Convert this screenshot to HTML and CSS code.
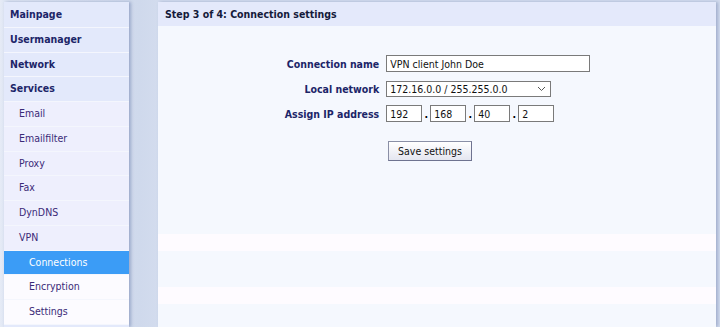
FILE: index.html
```html
<!DOCTYPE html>
<html lang="en">
<head>
    <meta charset="UTF-8">
    <meta name="viewport" content="width=device-width, initial-scale=1.0">
    <title>VPN - Connection settings</title>
    <link rel="stylesheet" href="styles.css">
</head>
<body>
    <div class="page">
        <ul class="menu">
            <li class="top"><a href="#">Mainpage</a></li>
            <li class="top"><a href="#">Usermanager</a></li>
            <li class="top"><a href="#">Network</a></li>
            <li class="top"><a href="#">Services</a></li>
            <li class="sub"><a href="#">Email</a></li>
            <li class="sub"><a href="#">Emailfilter</a></li>
            <li class="sub"><a href="#">Proxy</a></li>
            <li class="sub"><a href="#">Fax</a></li>
            <li class="sub"><a href="#">DynDNS</a></li>
            <li class="sub"><a href="#">VPN</a></li>
            <li class="subsub active"><a href="#">Connections</a></li>
            <li class="subsub"><a href="#">Encryption</a></li>
            <li class="subsub"><a href="#">Settings</a></li>
        </ul>

        <div class="main">
            <h2 class="main-title">Step 3 of 4: Connection settings</h2>
            <div class="main-body">
                <table class="form">
                    <tr>
                        <th>Connection name</th>
                        <td><input type="text" class="wide" value="VPN client John Doe"></td>
                    </tr>
                    <tr>
                        <th>Local network</th>
                        <td>
                            <div class="select">
                                <span>172.16.0.0 / 255.255.0.0</span>
                                <svg width="9" height="6" viewBox="0 0 9 6"><path d="M1 1 L4.5 4.5 L8 1" fill="none" stroke="#555" stroke-width="1"/></svg>
                            </div>
                        </td>
                    </tr>
                    <tr>
                        <th>Assign IP address</th>
                        <td class="ip">
                            <input type="text" value="192"><span>.</span><input type="text" value="168"><span>.</span><input type="text" value="40"><span>.</span><input type="text" value="2">
                        </td>
                    </tr>
                </table>
                <button class="save">Save settings</button>
            </div>
        </div>
    </div>
</body>
</html>
```

FILE: styles.css
```css
body {
    margin: 0;
    background: linear-gradient(to right, #e6ebf6 0px, #dfe6f4 4px, #cfd9ec 140px, #d3dcee 160px);
    font-family: "DejaVu Sans Condensed", "DejaVu Sans", Verdana, sans-serif;
    font-size: 10.5px;
    height: 327px;
    overflow: hidden;
}
.page {
    display: flex;
    align-items: flex-start;
    padding: 2px 0 0 4px;
}
.menu {
    list-style: none;
    margin: 0;
    padding: 1px 0 0;
    width: 125px;
    height: 325px;
    box-sizing: border-box;
    background: #e3e9fb;
    box-shadow: 2px 0 3px rgba(90, 110, 160, 0.45);
}
.menu li {
    border-bottom: 1px solid #f4f6fd;
}
.menu a {
    display: block;
    height: 23.75px;
    line-height: 23.75px;
    text-decoration: none;
}
.menu .top a {
    background: #e3e9fb;
    color: #1c2568;
    font-weight: bold;
    padding-left: 6px;
}
.menu .sub a {
    background: #eeeffd;
    color: #3b2a78;
    padding-left: 15px;
}
.menu .subsub a {
    background: #fcfbff;
    color: #3b2a78;
    padding-left: 25px;
}
.menu .active a {
    background: #3b9cf6;
    color: #fff;
}
.main {
    margin-left: 29px;
    width: 558px;
    box-shadow: 2px 0 3px rgba(90, 110, 160, 0.4);
}
.main-title {
    margin: 0;
    background: #e4e9fb;
    color: #141a3a;
    font-size: 10.5px;
    font-weight: bold;
    height: 24px;
    line-height: 24px;
    padding-left: 7px;
}
.main-body {
    background: #f5f8fe linear-gradient(to bottom, transparent 0, transparent 208px, #fefbff 208px, #fefbff 225px, transparent 225px, transparent 261px, #fefbff 261px, #fefbff 278px, transparent 278px);
    height: 301px;
    box-sizing: border-box;
    padding-top: 21px;
    text-align: center;
}
.form {
    margin: 0 auto;
    border-spacing: 0 8px;
    text-align: left;
}
.form th {
    text-align: right;
    color: #1c2568;
    font-weight: bold;
    padding-right: 7px;
    white-space: nowrap;
}
.form td {
    height: 17px;
    padding: 0;
}
input[type="text"] {
    font-family: "DejaVu Sans Condensed", "DejaVu Sans", Verdana, sans-serif;
    font-size: 10.5px;
    color: #111;
    border: 1px solid #7a7a7a;
    background: #fff;
    height: 17px;
    box-sizing: border-box;
    padding: 0 3px;
    margin: 0;
    width: 36px;
    vertical-align: middle;
}
input.wide {
    width: 204px;
}
.select {
    display: flex;
    align-items: center;
    justify-content: space-between;
    width: 165px;
    height: 16px;
    box-sizing: border-box;
    border: 1px solid #7a7a7a;
    background: #fff;
    padding: 0 4px 0 3px;
    color: #111;
}
.ip span {
    display: inline-block;
    width: 8px;
    text-align: center;
    font-weight: bold;
    vertical-align: middle;
}
.save {
    margin-top: 11px;
    margin-left: -14px;
    font-family: "DejaVu Sans Condensed", "DejaVu Sans", Verdana, sans-serif;
    font-size: 10.5px;
    color: #111;
    height: 20px;
    padding: 0 9px;
    border: 1px solid #8a8fa6;
    border-right-color: #6e7390;
    border-bottom-color: #6e7390;
    background: linear-gradient(#ffffff, #e4e6f0);
}
```
